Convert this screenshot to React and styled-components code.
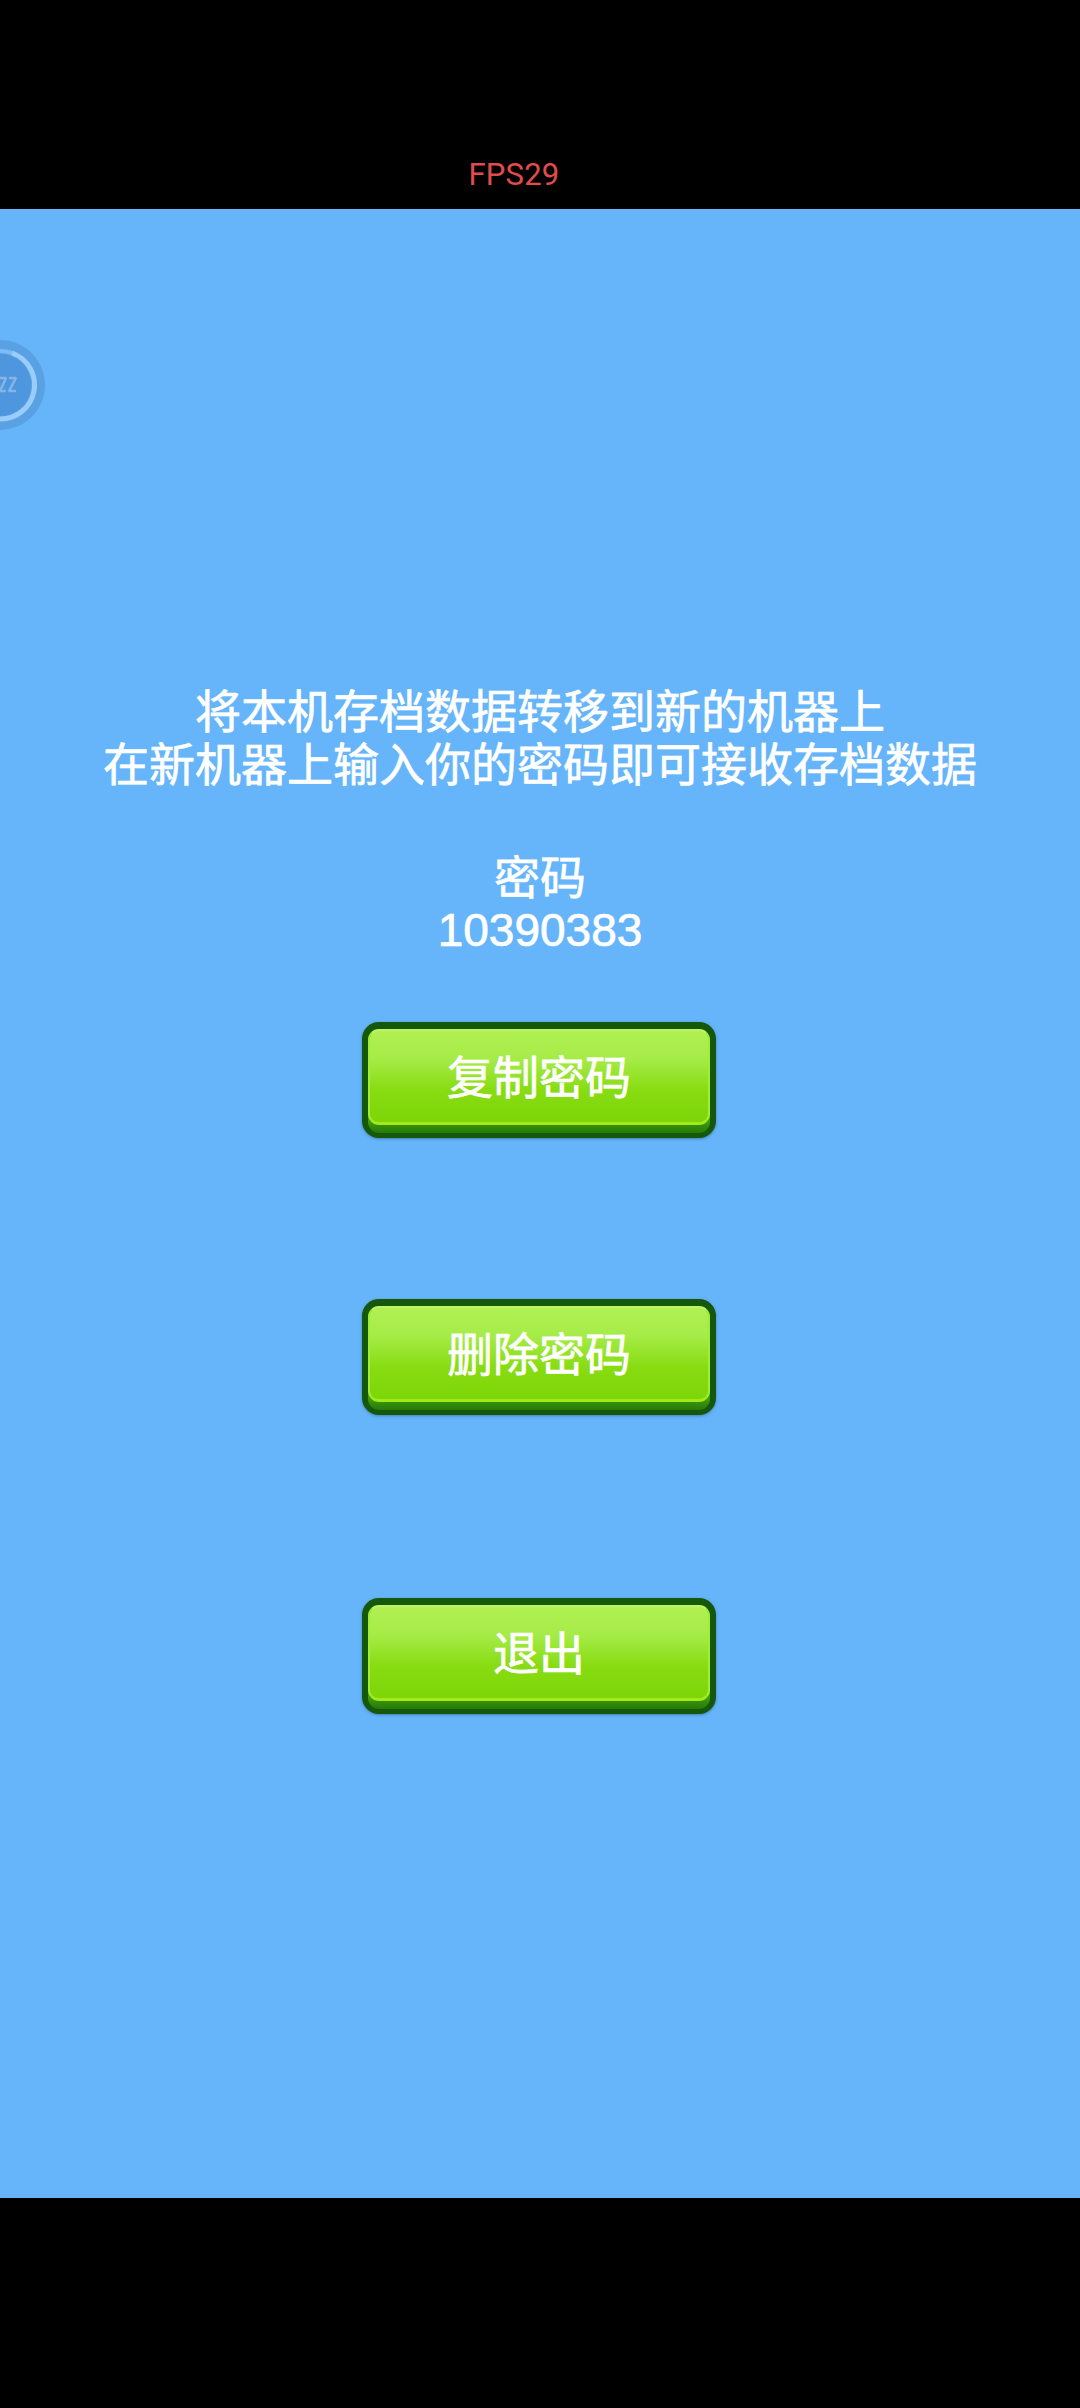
import React from "react";
import styled, { createGlobalStyle } from "styled-components";

const GlobalStyle = createGlobalStyle`
  html, body {
    margin: 0;
    padding: 0;
    background: #000000;
  }
`;

const Screen = styled.div`
  width: 1080px;
  height: 2408px;
  display: flex;
  flex-direction: column;
  background: #000000;
  font-family: "Liberation Sans", "Noto Sans CJK SC", sans-serif;
`;

const TopBar = styled.div`
  height: 209px;
  flex-shrink: 0;
  display: flex;
  justify-content: center;
  align-items: flex-start;
`;

const Fps = styled.span`
  margin: 156px 0 0 -52px;
  font-family: Roboto, sans-serif;
  font-size: 31px;
  line-height: 38px;
  font-weight: 400;
  letter-spacing: 0.2px;
  color: #e04c4c;
`;

const Stage = styled.main`
  position: relative;
  height: 1989px;
  padding-top: 477px;
  box-sizing: border-box;
  display: flex;
  flex-direction: column;
  align-items: center;
  background: #66b5fa;
  color: #ffffff;
  -webkit-text-stroke: 0.7px #ffffff;
`;

const SleepBadge = styled.svg`
  position: absolute;
  left: 0;
  top: 130px;
`;

const Message = styled.div`
  font-size: 46px;
  line-height: 53px;
  text-align: center;
  white-space: nowrap;
`;

const Password = styled.div`
  margin-top: 60px;
  font-size: 46px;
  line-height: 52px;
  text-align: center;
`;

const Actions = styled.div`
  margin: 66px 2px 0 0;
  display: flex;
  flex-direction: column;
  align-items: center;
`;

const GameButton = styled.button`
  width: 354px;
  height: 116px;
  margin-top: ${(p) => p.$gap}px;
  padding: 7px 6px 5px;
  box-sizing: border-box;
  border: 0;
  border-radius: 17px;
  background: #15570b;
  box-shadow: 0 1px 3px rgba(30, 80, 120, 0.5);
  font: inherit;
  color: inherit;
  display: block;
`;

const ButtonLip = styled.span`
  display: block;
  height: 104px;
  border-radius: 11px;
  background: linear-gradient(#3f9c0c 0 90%, #358f09 93%, #27790a 100%);
`;

const ButtonFace = styled.span`
  display: flex;
  align-items: center;
  justify-content: center;
  height: 96px;
  box-sizing: border-box;
  padding-top: 4px;
  border: 2px solid #a0ec38;
  border-top-color: #bdf266;
  border-bottom: 3px solid #a2e81a;
  border-radius: 11px;
  background: linear-gradient(#b0f052 0%, #a6ec48 30%, #88dc12 65%, #7cd608 100%);
  font-size: 46px;
  line-height: 53px;
`;

const buttons = [
  { label: "复制密码", gap: 0 },
  { label: "删除密码", gap: 161 },
  { label: "退出", gap: 183 },
];

export default function App() {
  return (
    <>
      <GlobalStyle />
      <Screen>
        <TopBar>
          <Fps>FPS29</Fps>
        </TopBar>
        <Stage>
          <SleepBadge width="46" height="92" viewBox="0 0 46 92">
            <circle cx="0" cy="46" r="45" fill="#5aa1e3" />
            <circle cx="0" cy="46" r="31" fill="#4e96de" />
            <path d="M0 12 A34 34 0 0 1 12 14" fill="none" stroke="#7dbcf2" strokeWidth="4" />
            <path d="M12 14 A34 34 0 0 1 0 80" fill="none" stroke="#9acdfa" strokeWidth="5" />
            <path
              d="M0 39h6l-6 13h6M9 39h7l-7 13h7"
              fill="none"
              stroke="#84b4e8"
              strokeWidth="2.5"
              strokeLinejoin="bevel"
            />
          </SleepBadge>
          <Message>
            将本机存档数据转移到新的机器上
            <br />
            在新机器上输入你的密码即可接收存档数据
          </Message>
          <Password>
            密码
            <br />
            10390383
          </Password>
          <Actions>
            {buttons.map((b) => (
              <GameButton key={b.label} $gap={b.gap}>
                <ButtonLip>
                  <ButtonFace>{b.label}</ButtonFace>
                </ButtonLip>
              </GameButton>
            ))}
          </Actions>
        </Stage>
      </Screen>
    </>
  );
}
